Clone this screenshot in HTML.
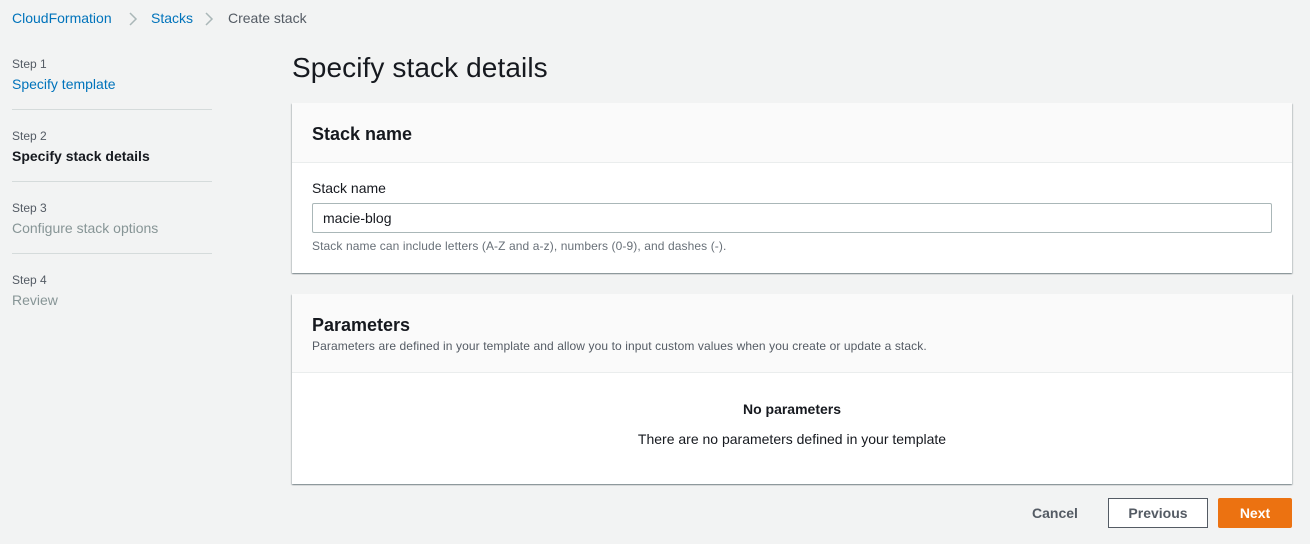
<!DOCTYPE html>
<html><head><style>
*{box-sizing:border-box;margin:0;padding:0}
body{width:1310px;height:544px;background:#f2f3f3;font-family:"Liberation Sans",sans-serif;color:#16191f;position:relative;overflow:hidden;font-size:14px}
.a{position:absolute;white-space:nowrap}
.link{color:#0073bb}
.step{font-size:12px;color:#545b64}
.hr{position:absolute;left:12px;width:200px;height:1px;background:#d5dbdb}
.panel{position:absolute;left:292px;width:1000px;background:#fff;box-shadow:0 1px 1px 0 rgba(0,28,36,.3),1px 1px 1px 0 rgba(0,28,36,.15),-1px 1px 1px 0 rgba(0,28,36,.15)}
.ph{position:absolute;left:0;top:0;width:100%;background:#fafafa;border-bottom:1px solid #eaeded}
.btn{position:absolute;height:30px;font-weight:bold;font-size:14px;text-align:center;line-height:28px}
.sm{font-size:12px;letter-spacing:0.1px}
</style></head><body>
<div class="a link" style="left:12px;top:10px">CloudFormation</div>
<svg class="a" style="left:128px;top:11px" width="10" height="16"><path d="M2 2l6 6-6 6" stroke="#aab7b8" stroke-width="1.5" fill="none"/></svg>
<div class="a link" style="left:151px;top:10px">Stacks</div>
<svg class="a" style="left:204px;top:11px" width="10" height="16"><path d="M2 2l6 6-6 6" stroke="#aab7b8" stroke-width="1.5" fill="none"/></svg>
<div class="a" style="left:228px;top:10px;color:#545b64">Create stack</div>

<div class="a step" style="left:12px;top:57px">Step 1</div>
<div class="a link" style="left:12px;top:76px">Specify template</div>
<div class="hr" style="top:109px"></div>
<div class="a step" style="left:12px;top:129px">Step 2</div>
<div class="a" style="left:12px;top:148px;font-weight:bold">Specify stack details</div>
<div class="hr" style="top:181px"></div>
<div class="a step" style="left:12px;top:201px">Step 3</div>
<div class="a" style="left:12px;top:220px;color:#879596">Configure stack options</div>
<div class="hr" style="top:253px"></div>
<div class="a step" style="left:12px;top:273px">Step 4</div>
<div class="a" style="left:12px;top:292px;color:#879596">Review</div>

<div class="a" style="left:292px;top:52px;font-size:28px;letter-spacing:0.1px">Specify stack details</div>

<div class="panel" style="top:103px;height:170px">
 <div class="ph" style="height:60px"></div>
 <div class="a" style="left:20px;top:21px;font-size:18px;font-weight:bold">Stack name</div>
 <div class="a" style="left:20px;top:77px">Stack name</div>
 <div class="a" style="left:20px;top:100px;width:960px;height:30px;border:1px solid #aab7b8;border-radius:2px;padding:6px 10px">macie-blog</div>
 <div class="a sm" style="left:20px;top:136px;color:#687078">Stack name can include letters (A-Z and a-z), numbers (0-9), and dashes (-).</div>
</div>

<div class="panel" style="top:294px;height:190px">
 <div class="ph" style="height:79px"></div>
 <div class="a" style="left:20px;top:21px;font-size:18px;font-weight:bold">Parameters</div>
 <div class="a sm" style="left:20px;top:45px;color:#545b64">Parameters are defined in your template and allow you to input custom values when you create or update a stack.</div>
 <div class="a" style="left:0;width:1000px;top:107px;text-align:center;font-weight:bold">No parameters</div>
 <div class="a" style="left:0;width:1000px;top:137px;text-align:center">There are no parameters defined in your template</div>
</div>

<div class="a" style="left:1032px;top:505px;font-weight:bold;color:#545b64">Cancel</div>
<div class="btn" style="left:1108px;top:498px;width:100px;border:1px solid #545b64;background:#fff;color:#545b64">Previous</div>
<div class="btn" style="left:1218px;top:498px;width:74px;background:#ec7211;color:#fff;border:1px solid #ec7211;border-radius:2px">Next</div>
</body></html>
